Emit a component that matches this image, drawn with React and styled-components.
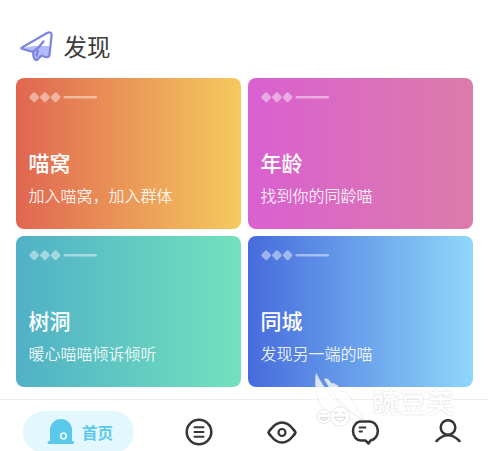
import React from "react";
import styled, { createGlobalStyle } from "styled-components";

const cards = [
  { title: "喵窝", text: "加入喵窝，加入群体", from: "#e06651", to: "#f5ca5e" },
  { title: "年龄", text: "找到你的同龄喵", from: "#d960d1", to: "#dc7ca9" },
  { title: "树洞", text: "暖心喵喵倾诉倾听", from: "#51b0c6", to: "#72e2bd" },
  { title: "同城", text: "发现另一端的喵", from: "#466bdc", to: "#8fd8fa" },
];

const PlaneIcon = () => (
  <svg width="34" height="32" viewBox="0 0 34 32">
    <path d="M2 18 L14 16 L31 16 L29 26 Q28 28 25 27 L21 26 L18 29 Q15 31 14 28 L12 22 Z" fill="#b4baf8" />
    <path
      d="M2 17.500 L27 3 Q32 1 31.500 6 L29.500 24.500 Q29 28 25.500 27 L21.500 25.500 L18 29 Q15 31.500 13.800 27.500 L13 22 L2.500 19 Q0.500 18.300 2 17.500 Z M13 22 Q19 18 23.500 11.500 M18 21 Q16.500 23 17 25.500"
      fill="none"
      stroke="#7f86e0"
      strokeWidth="2.3"
      strokeLinejoin="round"
      strokeLinecap="round"
    />
  </svg>
);

const HomeIcon = () => (
  <svg width="28" height="28" viewBox="0 0 28 28">
    <path d="M3 23 V12 a11 11 0 0 1 22 0 V23 h0.500 a1.500 1.500 0 0 1 0 3 H2 a1.500 1.500 0 0 1 0 -3 Z" fill="#5bc9eb" />
    <circle cx="16.500" cy="18" r="2.800" fill="#5bc9eb" stroke="#e3f7fe" strokeWidth="1.700" />
  </svg>
);

const ListIcon = () => (
  <svg width="28" height="28" viewBox="0 0 28 28">
    <circle cx="14" cy="14" r="12.300" />
    <path d="M9.500 9.300 h9 M9.500 14 h9 M9.500 18.700 h9" strokeWidth="2" />
  </svg>
);

const EyeIcon = () => (
  <svg width="30" height="24" viewBox="0 0 30 24">
    <path d="M1.500 12.500 Q2 11 4 9 Q9 2.500 15 2.500 T26 9 Q28 11 28.500 12.500 Q28 14 26 16 Q21 22.500 15 22.500 T4 16 Q2 14 1.500 12.500 Z" />
    <circle cx="15" cy="12.500" r="3.500" strokeWidth="2.200" />
  </svg>
);

const ChatIcon = () => (
  <svg width="28" height="26" viewBox="0 0 28 26">
    <path d="M10 2.500 h8 a8 9.500 0 0 1 1.500 19 L17.500 24.500 L14.500 21.500 H10 A8 9.500 0 0 1 10 2.500 Z" />
    <path d="M8.500 8.500 h6 M8.500 12.500 h2.500" strokeWidth="1.800" />
  </svg>
);

const UserIcon = () => (
  <svg width="28" height="26" viewBox="0 0 28 26">
    <circle cx="14" cy="8.500" r="7.300" />
    <path d="M2.500 22 Q14 10.500 25.500 22" />
  </svg>
);

const Marks = () => (
  <svg width="70" height="12" viewBox="0 0 70 12">
    <g fill="#fff" fillOpacity="0.45">
      {[5.2, 15.9, 26.6].map((x) => (
        <rect key={x} x={x - 3.9} y="2.300" width="7.800" height="7.800" rx="1.500" transform={`rotate(45 ${x} 6.200)`} />
      ))}
      <rect x="34.500" y="4.900" width="33.500" height="2.600" rx="1.300" />
    </g>
  </svg>
);

const PodIcon = () => (
  <svg width="54" height="56" viewBox="0 0 54 56">
    <g fill="#fff" stroke="#ccc" strokeOpacity="0.5" strokeWidth="0.600">
      <path d="M2 0 Q8 12 18 24 Q31 37 50 47 Q22 46 8 34 Q-1 20 2 0 Z" fillOpacity="0.78" />
      <path d="M10 6 Q14 4 17 10 Q24 10 27 18 Q35 18 37 27 Q42 29 43 38 Q48 41 50 47 Q34 38 23 25 Q15 16 10 6 Z" fillOpacity="0.75" />
    </g>
    <g fill="#fff" stroke="#e4e4e4" strokeWidth="0.900">
      <circle cx="10" cy="43.500" r="7" />
      <circle cx="26" cy="43.500" r="9.700" />
    </g>
    <g fill="none" stroke="#d4d4d4" strokeWidth="1" strokeLinecap="round">
      <path d="M6 41 q1.300 -1.500 2.500 0 M11 41 q1.300 -1.500 2.500 0 M6 45 q4 5 8 0 Z M20.500 40 q1.500 -2 3 0 M28 40 q1.500 -2 3 0 M20.500 44.500 q5.500 8 11 0 Z" />
    </g>
  </svg>
);

const App = () => {
  return (
    <>
      <GlobalStyle />
      <Page>
        <Heading>
          <PlaneIcon />
          <h1>发现</h1>
        </Heading>
        <CardGrid>
          {cards.map((card) => (
            <Card key={card.title} $from={card.from} $to={card.to}>
              <Marks />
              <CardTitle>{card.title}</CardTitle>
              <CardText>{card.text}</CardText>
            </Card>
          ))}
        </CardGrid>
        <TabBar>
          <ActiveTab>
            <HomeIcon />
            <span>首页</span>
          </ActiveTab>
          <Tab>
            <ListIcon />
          </Tab>
          <Tab>
            <EyeIcon />
          </Tab>
          <Tab>
            <ChatIcon />
          </Tab>
          <Tab>
            <UserIcon />
          </Tab>
        </TabBar>
        <Watermark>
          <PodIcon />
          <span>豌豆荚</span>
        </Watermark>
      </Page>
    </>
  );
};

export default App;

const GlobalStyle = createGlobalStyle`
  * {
    box-sizing: border-box;
  }
  body {
    margin: 0;
    background: #fff;
    font-family: "Noto Sans CJK SC", sans-serif;
  }
  svg {
    display: block;
    flex-shrink: 0;
  }
`;

const Page = styled.div`
  position: relative;
  width: 488px;
  height: 451px;
  overflow: hidden;
  background: #fff;
`;

const Heading = styled.header`
  display: flex;
  align-items: center;
  gap: 10px;
  height: 78.4px;
  padding: 13px 0 0 19.5px;
  h1 {
    margin: 0;
    color: #3c3c3c;
    font-size: 23.5px;
    font-weight: 400;
    line-height: 34px;
  }
`;

const CardGrid = styled.main`
  display: grid;
  grid-template-columns: 225.5px 225.5px;
  grid-auto-rows: 151px;
  gap: 7px 6.5px;
  padding-left: 15.5px;
`;

const Card = styled.section`
  padding: 12.5px 13px;
  border-radius: 8px;
  background: linear-gradient(90deg, ${({ $from }) => $from}, ${({ $to }) => $to});
  color: #fff;
`;

const CardTitle = styled.h2`
  margin: 43px 0 0;
  font-size: 21px;
  font-weight: 500;
  line-height: 32px;
`;

const CardText = styled.p`
  margin: 5.2px 0 0;
  color: rgba(255, 255, 255, 0.9);
  font-size: 16px;
  font-weight: 350;
  line-height: 24px;
`;

const TabBar = styled.nav`
  display: flex;
  height: 52px;
  margin-top: 11.6px;
  padding: 11px 0 0 23px;
  border-top: 1px solid #eee;
`;

const ActiveTab = styled.div`
  display: flex;
  flex-shrink: 0;
  align-items: center;
  gap: 7px;
  width: 111px;
  height: 42px;
  margin-right: 23px;
  padding-left: 24px;
  border-radius: 21px;
  background: #e3f7fe;
  color: #5bc9eb;
  span {
    font-size: 15.5px;
    font-weight: 700;
  }
`;

const Tab = styled.div`
  display: flex;
  flex-shrink: 0;
  justify-content: center;
  align-items: center;
  width: 83px;
  height: 42px;
  svg {
    fill: none;
    stroke: #363636;
    stroke-width: 2.5;
    stroke-linecap: round;
    stroke-linejoin: round;
  }
`;

// sits over the last card and the tab bar
const Watermark = styled.div`
  position: absolute;
  left: 314px;
  top: 373px;
  display: flex;
  gap: 4px;
  pointer-events: none;
  span {
    margin-top: 8px;
    color: #fff;
    font-size: 27.5px;
    font-weight: 500;
    line-height: 40px;
    text-shadow: 0 0 1.5px #c8c8c8;
  }
`;
